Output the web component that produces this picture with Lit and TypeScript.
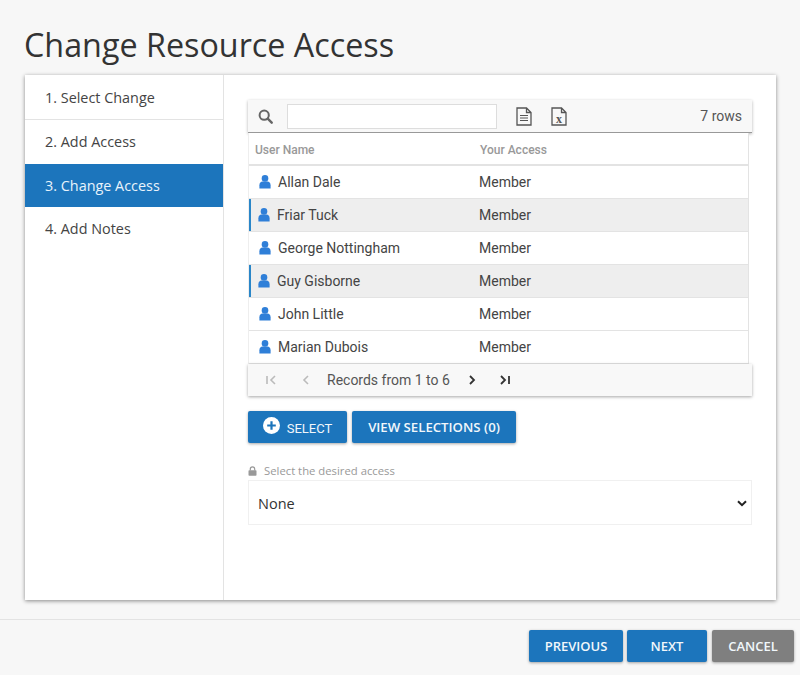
import { LitElement, html, css } from "lit";
import { customElement } from "lit/decorators.js";

const person = html`<svg class="person" viewBox="0 0 12 14"><circle cx="6" cy="3.4" r="3.3" fill="#2f7fd8"/><path d="M0.4 13.6V10.2c0-2.4 1.6-3.6 3-3.6h5.2c1.4 0 3 1.2 3 3.6v3.4z" fill="#2f7fd8"/></svg>`;

@customElement("app-root")
export class AppRoot extends LitElement {
  static styles = css`
    :host { display: block; width: 800px; height: 675px; background: #f7f7f7; font-family: Roboto, sans-serif; color: #333; overflow: hidden; }
    .page { display: flex; flex-direction: column; height: 675px; }
    h1 { margin: 0; padding: 24px 0 0 24px; height: 51px; font: 400 32.3px/40px "Open Sans", sans-serif; color: #333; }
    .card { display: flex; margin: 0 24px 0 25px; height: 525px; background: #fff; box-shadow: 0 1px 4px rgba(0,0,0,.45); }
    .steps { width: 198px; border-right: 1px solid #e3e3e3; flex: none; font: 400 14.4px "Open Sans", sans-serif; }
    .step { height: 44px; display: flex; align-items: center; padding: 0 0 2px 20px; color: #444; box-sizing: border-box; }
    .step.line { height: 45px; padding: 1px 0 0 20px; border-bottom: 1px solid #e3e3e3; }
    .step.active { height: 43px; padding-bottom: 1px; background: #1c75bc; color: #e8f3fb; }
    .main { flex: 1; padding: 25px 24px 0 24px; min-width: 0; }
    .toolbar { height: 32px; display: flex; align-items: center; background: #f8f8f8; box-shadow: 0 1px 3px rgba(0,0,0,.3); border-bottom: 1px solid #999; }
    .search { margin-left: 10px; width: 15px; height: 15px; }
    .input { margin-left: 14px; width: 208px; height: 23px; border: 1px solid #ddd; background: #fff; }
    .file { width: 16px; height: 19px; margin-left: 19px; }
    .rows { margin-left: auto; margin-right: 10px; font-size: 14px; color: #555; }
    .table { width: 501px; border-right: 1px solid #e3e3e3; border-left: 1px solid #eee; box-sizing: border-box; background: #fff; }
    .head { height: 33px; box-sizing: border-box; padding: 2px 0 0 6px; display: grid; grid-template-columns: 225px 1fr; align-items: center; border-bottom: 2px solid #e3e3e3; font-size: 12px; font-weight: 500; color: #999; }
    .row { height: 32px; display: grid; grid-template-columns: 230px 1fr; align-items: center; border-bottom: 1px solid #e3e3e3; font-size: 14px; color: #444; }
    .row.sel { background: #eeeeee; box-shadow: inset 2px 0 0 #2a86c8; }
    .name { display: flex; align-items: center; gap: 7px; padding-left: 10px; }
    .row.sel .name { padding-left: 9px; }
    .person { width: 12px; height: 14px; flex: none; }
    .pager { height: 32px; display: flex; align-items: center; background: #f8f8f8; box-shadow: 0 1px 3px rgba(0,0,0,.35); font-size: 14px; color: #555; }
    .pg { width: 12px; height: 12px; flex: none; }
    .pg.first { margin-left: 17px; }
    .pg.prev { margin-left: 23px; }
    .records { margin-left: 15px; }
    .pg.next { margin-left: 16px; }
    .pg.last { margin-left: 21px; }
    .actions { display: flex; gap: 5px; margin-top: 15px; }
    button { border: 0; border-radius: 2px; background: #1c75bc; color: #f1f7fb; height: 32px; box-shadow: 0 1px 3px rgba(0,0,0,.35); display: flex; align-items: center; justify-content: center; padding: 0; }
    .b-select { width: 99px; gap: 7px; font: 400 13px Roboto, sans-serif; }
    .b-view { width: 164px; font: 600 13.2px "Open Sans", sans-serif; }
    .plus { width: 17px; height: 17px; margin-top: -3px; }
    .b-select span { margin-top: 3px; }
    .label { display: flex; align-items: center; gap: 7px; margin-top: 20px; font: 400 11.3px "Open Sans", sans-serif; color: #999; height: 15px; }
    .lock { width: 9px; height: 10px; }
    .select { margin-top: 2px; height: 45px; box-sizing: border-box; border: 1px solid #f0f0f0; display: flex; align-items: center; justify-content: space-between; padding: 1px 4px 0 9px; font: 400 14.5px "Open Sans", sans-serif; color: #333; }
    .chev { width: 10px; height: 7px; }
    .footer { margin-top: 19px; border-top: 1px solid #e3e3e3; flex: 1; display: flex; justify-content: flex-end; gap: 5px; padding: 10px 6px 0 0; }
    .footer button { font: 600 13px "Open Sans", sans-serif; }
    .b-prev { width: 94px; margin-right: -1px; } .b-next { width: 80px; } .b-cancel { width: 82px; background: #7f7f7f; }
    .xmark { font: 700 12px "Liberation Serif", serif; fill: #555; }
  `;

  render() {
    const users = [
      ["Allan Dale", false], ["Friar Tuck", true], ["George Nottingham", false],
      ["Guy Gisborne", true], ["John Little", false], ["Marian Dubois", false],
    ] as [string, boolean][];
    return html`<div class="page">
      <h1>Change Resource Access</h1>
      <div class="card">
        <div class="steps">
          <div class="step line">1. Select Change</div>
          <div class="step">2. Add Access</div>
          <div class="step active">3. Change Access</div>
          <div class="step">4. Add Notes</div>
        </div>
        <div class="main">
          <div class="toolbar">
            <svg class="search" viewBox="0 0 15 15"><circle cx="6.2" cy="6.2" r="4.6" fill="none" stroke="#666" stroke-width="2"/><path d="M9.7 9.7l4 4" stroke="#666" stroke-width="2.4" stroke-linecap="round"/></svg>
            <div class="input"></div>
            <svg class="file" viewBox="0 0 16 19"><path d="M1 1h9.5l4.5 4.5V18H1z M10.5 1v4.5H15" fill="none" stroke="#555" stroke-width="1.3"/><path d="M4 8.5h8M4 11h8M4 13.5h8" stroke="#555" stroke-width="1.2"/></svg>
            <svg class="file" viewBox="0 0 16 19"><path d="M1 1h9.5l4.5 4.5V18H1z M10.5 1v4.5H15" fill="none" stroke="#555" stroke-width="1.3"/><text class="xmark" x="8" y="15.5" text-anchor="middle">x</text></svg>
            <span class="rows">7 rows</span>
          </div>
          <div class="table">
            <div class="head"><span>User Name</span><span>Your Access</span></div>
            ${users.map(([n, s]) => html`<div class="row ${s ? "sel" : ""}"><div class="name">${person}<span>${n}</span></div><span>Member</span></div>`)}
          </div>
          <div class="pager">
            <svg class="pg first" viewBox="0 0 12 12"><path d="M2 2v8M10 2L6 6l4 4" fill="none" stroke="#bbb" stroke-width="1.6"/></svg>
            <svg class="pg prev" viewBox="0 0 12 12"><path d="M8 2L4 6l4 4" fill="none" stroke="#bbb" stroke-width="1.6"/></svg>
            <span class="records">Records from 1 to 6</span>
            <svg class="pg next" viewBox="0 0 12 12"><path d="M4 2l4 4-4 4" fill="none" stroke="#333" stroke-width="1.8"/></svg>
            <svg class="pg last" viewBox="0 0 12 12"><path d="M2 2l4 4-4 4M10 2v8" fill="none" stroke="#333" stroke-width="1.8"/></svg>
          </div>
          <div class="actions">
            <button class="b-select"><svg class="plus" viewBox="0 0 17 17"><circle cx="8.5" cy="8.5" r="8.5" fill="#fff"/><path d="M8.5 4.2v8.6M4.2 8.5h8.6" stroke="#1c75bc" stroke-width="2.2"/></svg><span>SELECT</span></button>
            <button class="b-view">VIEW SELECTIONS (0)</button>
          </div>
          <div class="label"><svg class="lock" viewBox="0 0 9 10"><path d="M2.3 4.5V3a2.2 2.2 0 0 1 4.4 0v1.5" fill="none" stroke="#999" stroke-width="1.2"/><rect x="0.5" y="4.3" width="8" height="5.5" rx=".8" fill="#999"/></svg><span>Select the desired access</span></div>
          <div class="select"><span>None</span><svg class="chev" viewBox="0 0 10 7"><path d="M1 1.2l4 4 4-4" fill="none" stroke="#222" stroke-width="2"/></svg></div>
        </div>
      </div>
      <div class="footer">
        <button class="b-prev">PREVIOUS</button>
        <button class="b-next">NEXT</button>
        <button class="b-cancel">CANCEL</button>
      </div>
    </div>`;
  }
}
